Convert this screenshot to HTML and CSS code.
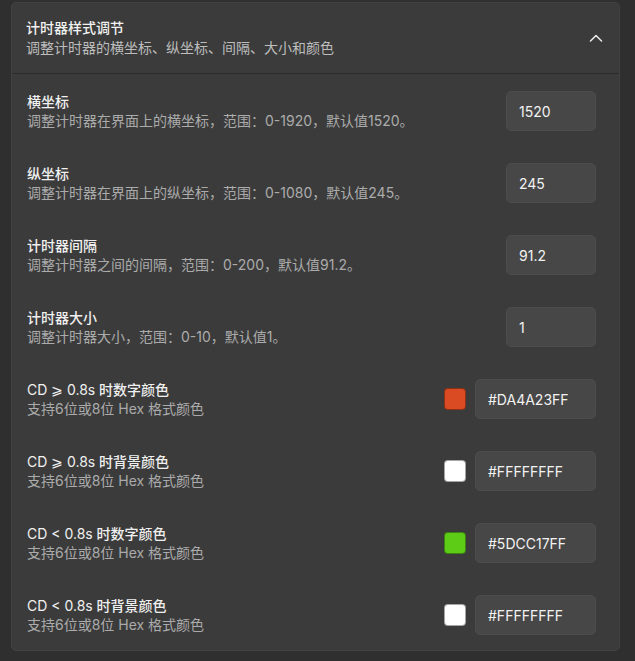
FILE: index.html
```html
<!DOCTYPE html>
<html lang="zh-CN">
<head>
<meta charset="utf-8">
<title>计时器样式调节</title>
<link rel="stylesheet" href="styles.css">
</head>
<body>
<section class="card">
  <header class="card-header">
    <div class="header-text">
      <div class="title">计时器样式调节</div>
      <div class="subtitle">调整计时器的横坐标、纵坐标、间隔、大小和颜色</div>
    </div>
    <svg class="chevron" width="14" height="8" viewBox="0 0 14 8"><path d="M1.5 7 L7 1.5 L12.5 7" fill="none" stroke="#e6e6e6" stroke-width="1.6" stroke-linecap="round" stroke-linejoin="round"/></svg>
  </header>
  <div class="card-body">
    <div class="row">
      <div class="info"><div class="label">横坐标</div><div class="desc">调整计时器在界面上的横坐标，范围：0-1920，默认值1520。</div></div>
      <div class="control"><div class="input num">1520</div></div>
    </div>
    <div class="row">
      <div class="info"><div class="label">纵坐标</div><div class="desc">调整计时器在界面上的纵坐标，范围：0-1080，默认值245。</div></div>
      <div class="control"><div class="input num">245</div></div>
    </div>
    <div class="row">
      <div class="info"><div class="label">计时器间隔</div><div class="desc">调整计时器之间的间隔，范围：0-200，默认值91.2。</div></div>
      <div class="control"><div class="input num">91.2</div></div>
    </div>
    <div class="row">
      <div class="info"><div class="label">计时器大小</div><div class="desc">调整计时器大小，范围：0-10，默认值1。</div></div>
      <div class="control"><div class="input num">1</div></div>
    </div>
    <div class="row">
      <div class="info"><div class="label"><span class="lat">CD ⩾ 0.8s</span> 时数字颜色</div><div class="desc">支持6位或8位 Hex 格式颜色</div></div>
      <div class="control"><span class="swatch" style="background:#DA4A23"></span><div class="input hex">#DA4A23FF</div></div>
    </div>
    <div class="row">
      <div class="info"><div class="label"><span class="lat">CD ⩾ 0.8s</span> 时背景颜色</div><div class="desc">支持6位或8位 Hex 格式颜色</div></div>
      <div class="control"><span class="swatch" style="background:#FFFFFF"></span><div class="input hex">#FFFFFFFF</div></div>
    </div>
    <div class="row">
      <div class="info"><div class="label"><span class="lat">CD &lt; 0.8s</span> 时数字颜色</div><div class="desc">支持6位或8位 Hex 格式颜色</div></div>
      <div class="control"><span class="swatch" style="background:#5DCC17"></span><div class="input hex">#5DCC17FF</div></div>
    </div>
    <div class="row">
      <div class="info"><div class="label"><span class="lat">CD &lt; 0.8s</span> 时背景颜色</div><div class="desc">支持6位或8位 Hex 格式颜色</div></div>
      <div class="control"><span class="swatch" style="background:#FFFFFF"></span><div class="input hex">#FFFFFFFF</div></div>
    </div>
  </div>
</section>
</body>
</html>
```

FILE: styles.css
```css
html, body {
  margin: 0;
  padding: 0;
  background: #2f2f2f;
}
body {
  padding: 2px 15px 10px 11px;
  font-family: Inter, "Noto Sans CJK SC", "DejaVu Sans", sans-serif;
  color: #ececec;
}
.card {
  background: #3b3b3b;
  border: 1px solid #424242;
  border-radius: 5px;
  overflow: hidden;
}
.card-header {
  display: flex;
  align-items: center;
  justify-content: space-between;
  padding: 15px 16px 16px 14px;
  border-bottom: 1px solid #2b2b2b;
}
.title {
  font-size: 14px;
  line-height: 20px;
  font-weight: 500;
  color: #f2f2f2;
}
.subtitle {
  font-size: 14px;
  line-height: 19px;
  color: #bdbdbd;
}
.chevron {
  display: block;
}
.card-body {
  display: flex;
  flex-direction: column;
  gap: 32px;
  padding: 17px 23px 15px 15px;
}
.row {
  display: flex;
  align-items: center;
  justify-content: space-between;
  height: 40px;
}
.label {
  font-size: 14px;
  line-height: 19px;
  font-weight: 500;
  color: #f0f0f0;
}
.lat {
  font-weight: 400;
}
.desc {
  font-size: 14px;
  line-height: 19px;
  color: #ababab;
}
.control {
  display: flex;
  align-items: center;
  gap: 9px;
}
.input {
  box-sizing: border-box;
  height: 40px;
  background: #474747;
  border: 1px solid #4c4c4c;
  border-radius: 5px;
  padding: 0 12px;
  display: flex;
  align-items: center;
  font-size: 14px;
  color: #f2f2f2;
}
.num { width: 90px; }
.hex { width: 121px; }
.swatch {
  width: 22px;
  height: 22px;
  border-radius: 4px;
  box-sizing: border-box;
  border: 1px solid rgba(0,0,0,0.35);
}
```
